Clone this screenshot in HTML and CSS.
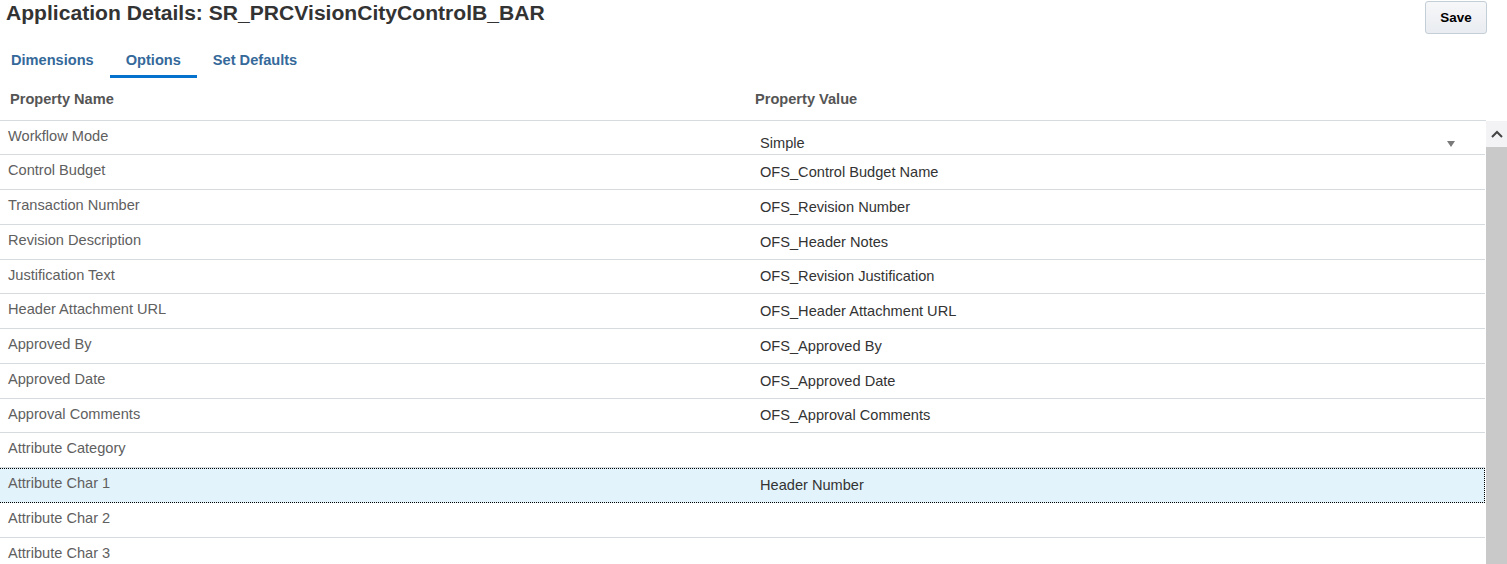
FILE: index.html
```html
<!DOCTYPE html>
<html lang="en">
<head>
  <meta charset="UTF-8">
  <title>Application Details</title>
  <link rel="stylesheet" href="styles.css">
</head>
<body>
  <div class="page-header">
    <h1>Application Details: SR_PRCVisionCityControlB_BAR</h1>
    <button class="btn-save">Save</button>
  </div>

  <div class="tabs">
    <a href="#" class="tab first">Dimensions</a>
    <a href="#" class="tab active">Options</a>
    <a href="#" class="tab">Set Defaults</a>
  </div>

  <div class="grid-head">
    <div class="col-name">Property Name</div>
    <div class="col-value">Property Value</div>
  </div>

  <div class="grid-body">
    <div class="rows">
      <div class="row">
        <div class="cell-name">Workflow Mode</div>
        <div class="cell-value select">
          <span>Simple</span>
          <span class="caret"></span>
        </div>
      </div>
      <div class="row">
        <div class="cell-name">Control Budget</div>
        <div class="cell-value">OFS_Control Budget Name</div>
      </div>
      <div class="row">
        <div class="cell-name">Transaction Number</div>
        <div class="cell-value">OFS_Revision Number</div>
      </div>
      <div class="row">
        <div class="cell-name">Revision Description</div>
        <div class="cell-value">OFS_Header Notes</div>
      </div>
      <div class="row">
        <div class="cell-name">Justification Text</div>
        <div class="cell-value">OFS_Revision Justification</div>
      </div>
      <div class="row">
        <div class="cell-name">Header Attachment URL</div>
        <div class="cell-value">OFS_Header Attachment URL</div>
      </div>
      <div class="row">
        <div class="cell-name">Approved By</div>
        <div class="cell-value">OFS_Approved By</div>
      </div>
      <div class="row">
        <div class="cell-name">Approved Date</div>
        <div class="cell-value">OFS_Approved Date</div>
      </div>
      <div class="row">
        <div class="cell-name">Approval Comments</div>
        <div class="cell-value">OFS_Approval Comments</div>
      </div>
      <div class="row">
        <div class="cell-name">Attribute Category</div>
        <div class="cell-value"></div>
      </div>
      <div class="row selected">
        <div class="cell-name">Attribute Char 1</div>
        <div class="cell-value">Header Number</div>
      </div>
      <div class="row">
        <div class="cell-name">Attribute Char 2</div>
        <div class="cell-value"></div>
      </div>
      <div class="row">
        <div class="cell-name">Attribute Char 3</div>
        <div class="cell-value"></div>
      </div>
    </div>

    <div class="scrollbar">
      <div class="scroll-up">
        <svg width="12" height="8" viewBox="0 0 12 8">
          <path d="M1 7 L6 2 L11 7" fill="none" stroke="#444" stroke-width="2"/>
        </svg>
      </div>
      <div class="scroll-track"></div>
    </div>
  </div>
</body>
</html>
```

FILE: styles.css
```css
* {
  margin: 0;
  padding: 0;
  box-sizing: border-box;
}
html, body {
  height: 100%;
  overflow: hidden;
}
body {
  font-family: "Liberation Sans", Arial, sans-serif;
  background: white;
  color: #333;
  display: flex;
  flex-direction: column;
}
.page-header {
  height: 40px;
  flex-shrink: 0;
  display: flex;
  justify-content: space-between;
  align-items: flex-start;
  padding: 0 20px 0 6px;
}
.page-header h1 {
  font-size: 21.1px;
  line-height: 24px;
  padding-top: 1px;
  color: #333;
}
.btn-save {
  margin-top: 1px;
  width: 62px;
  height: 33px;
  font-family: inherit;
  font-size: 13.4px;
  font-weight: bold;
  color: #000;
  background: linear-gradient(#f6f7f9, #e9ecf0);
  border: 1px solid #c4ced7;
  border-radius: 3px;
}
.tabs {
  display: flex;
  height: 38px;
  flex-shrink: 0;
}
.tab {
  display: block;
  padding: 5px 16px 0;
  line-height: 30px;
  font-size: 14.6px;
  font-weight: bold;
  color: #35699a;
  text-decoration: none;
  border-bottom: 3px solid transparent;
}
.tab.first {
  padding-left: 11px;
}
.tab.active {
  border-bottom-color: #0572ce;
}
.grid-head {
  display: flex;
  height: 42.6px;
  flex-shrink: 0;
  width: 1486px;
  align-items: center;
  border-bottom: 1px solid #d6dbdf;
  font-size: 14.6px;
  font-weight: bold;
  color: #555;
}
.col-name {
  width: 750px;
  padding-left: 10px;
}
.col-value {
  padding-left: 5px;
}
.grid-body {
  flex: 1;
  display: flex;
  min-height: 0;
}
.rows {
  width: 1485px;
  margin-right: 1px;
}
.row {
  display: flex;
  height: 34.75px;
  border-bottom: 1px solid #d6dbdf;
  font-size: 14.6px;
}
.cell-name {
  width: 750px;
  padding: 7px 0 0 8px;
  line-height: 17px;
  color: #606060;
}
.cell-value {
  flex: 1;
  padding-left: 10px;
  display: flex;
  align-items: center;
  color: #333;
}
.cell-value.select {
  align-items: flex-start;
  padding-top: 14px;
  padding-right: 30px;
  justify-content: space-between;
  line-height: 17px;
}
.caret {
  margin-top: 6px;
  width: 0;
  height: 0;
  border-left: 4px solid transparent;
  border-right: 4px solid transparent;
  border-top: 6px solid #7a7a7a;
}
.row.selected {
  background: #e3f3fb;
  border: 1px dotted #000;
  border-left: none;
}
.row.selected .cell-name {
  padding-top: 6px;
}
.scrollbar {
  width: 21px;
  display: flex;
  flex-direction: column;
}
.scroll-up {
  height: 26px;
  background: #f3f3f5;
  display: flex;
  align-items: center;
  justify-content: center;
}
.scroll-track {
  flex: 1;
  background: #c9c9c9;
}
```
